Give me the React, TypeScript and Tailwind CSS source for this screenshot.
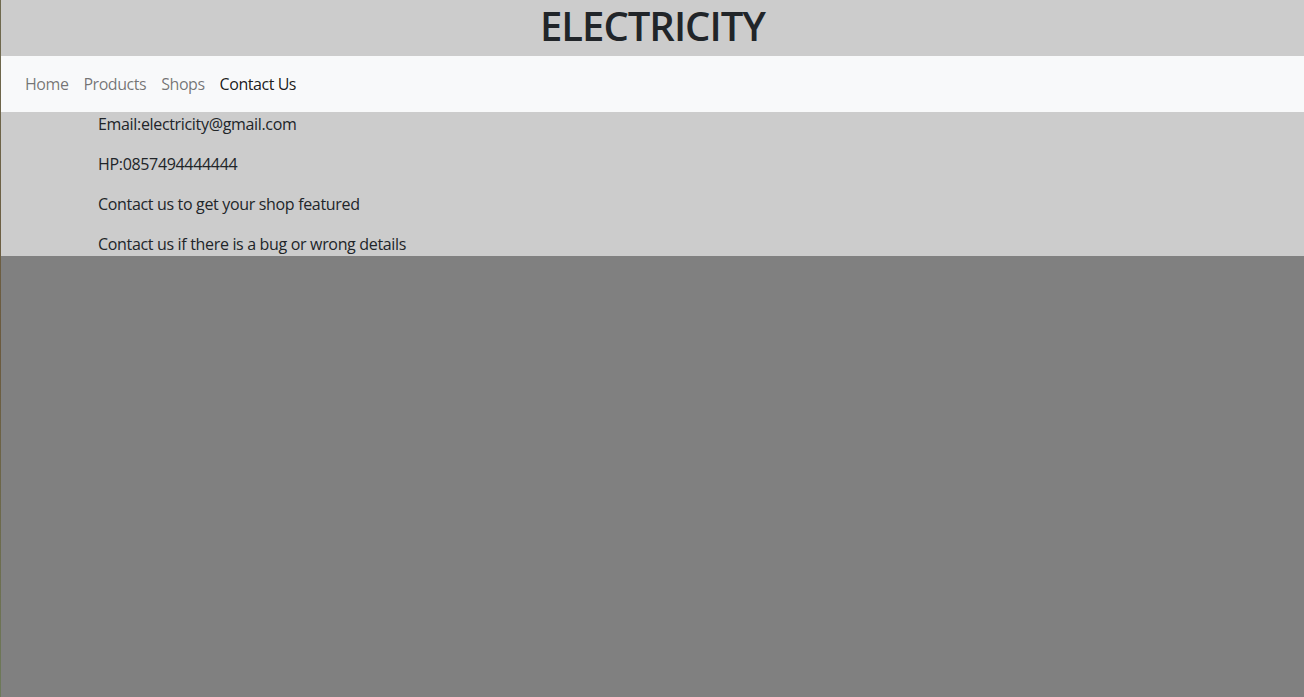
export default function App() {
  const links = ["Home", "Products", "Shops", "Contact Us"];

  return (
    <div className="flex min-h-[697px] bg-[#808080] font-['Open_Sans',sans-serif] text-[#212529]">
      {/* background image peeks through at the left edge */}
      <div className="w-px shrink-0 bg-gradient-to-b from-[#6f6a4f] via-[#6b5a3e] to-[#6d7a5a]" />
      <div className="flex-1">
        <header className="flex h-14 items-center justify-center bg-[#cccccc] pb-1">
          <h1 className="text-[40px] font-semibold leading-none tracking-tight">ELECTRICITY</h1>
        </header>

        <nav className="flex h-14 items-center gap-[15px] bg-[#f8f9fa] px-6 tracking-[-0.45px]">
          {links.map((l) => (
            <a
              key={l}
              href="#"
              className={l === "Contact Us" ? "text-base text-black/90" : "text-base text-black/55"}
            >
              {l}
            </a>
          ))}
        </nav>

        <section className="flex flex-col gap-4 bg-[#cccccc] pl-[97px] text-base leading-6 tracking-[-0.33px]">
          <p>Email:electricity@gmail.com</p>
          <p>HP:0857494444444</p>
          <p>Contact us to get your shop featured</p>
          <p>Contact us if there is a bug or wrong details</p>
        </section>
      </div>
    </div>
  );
}
